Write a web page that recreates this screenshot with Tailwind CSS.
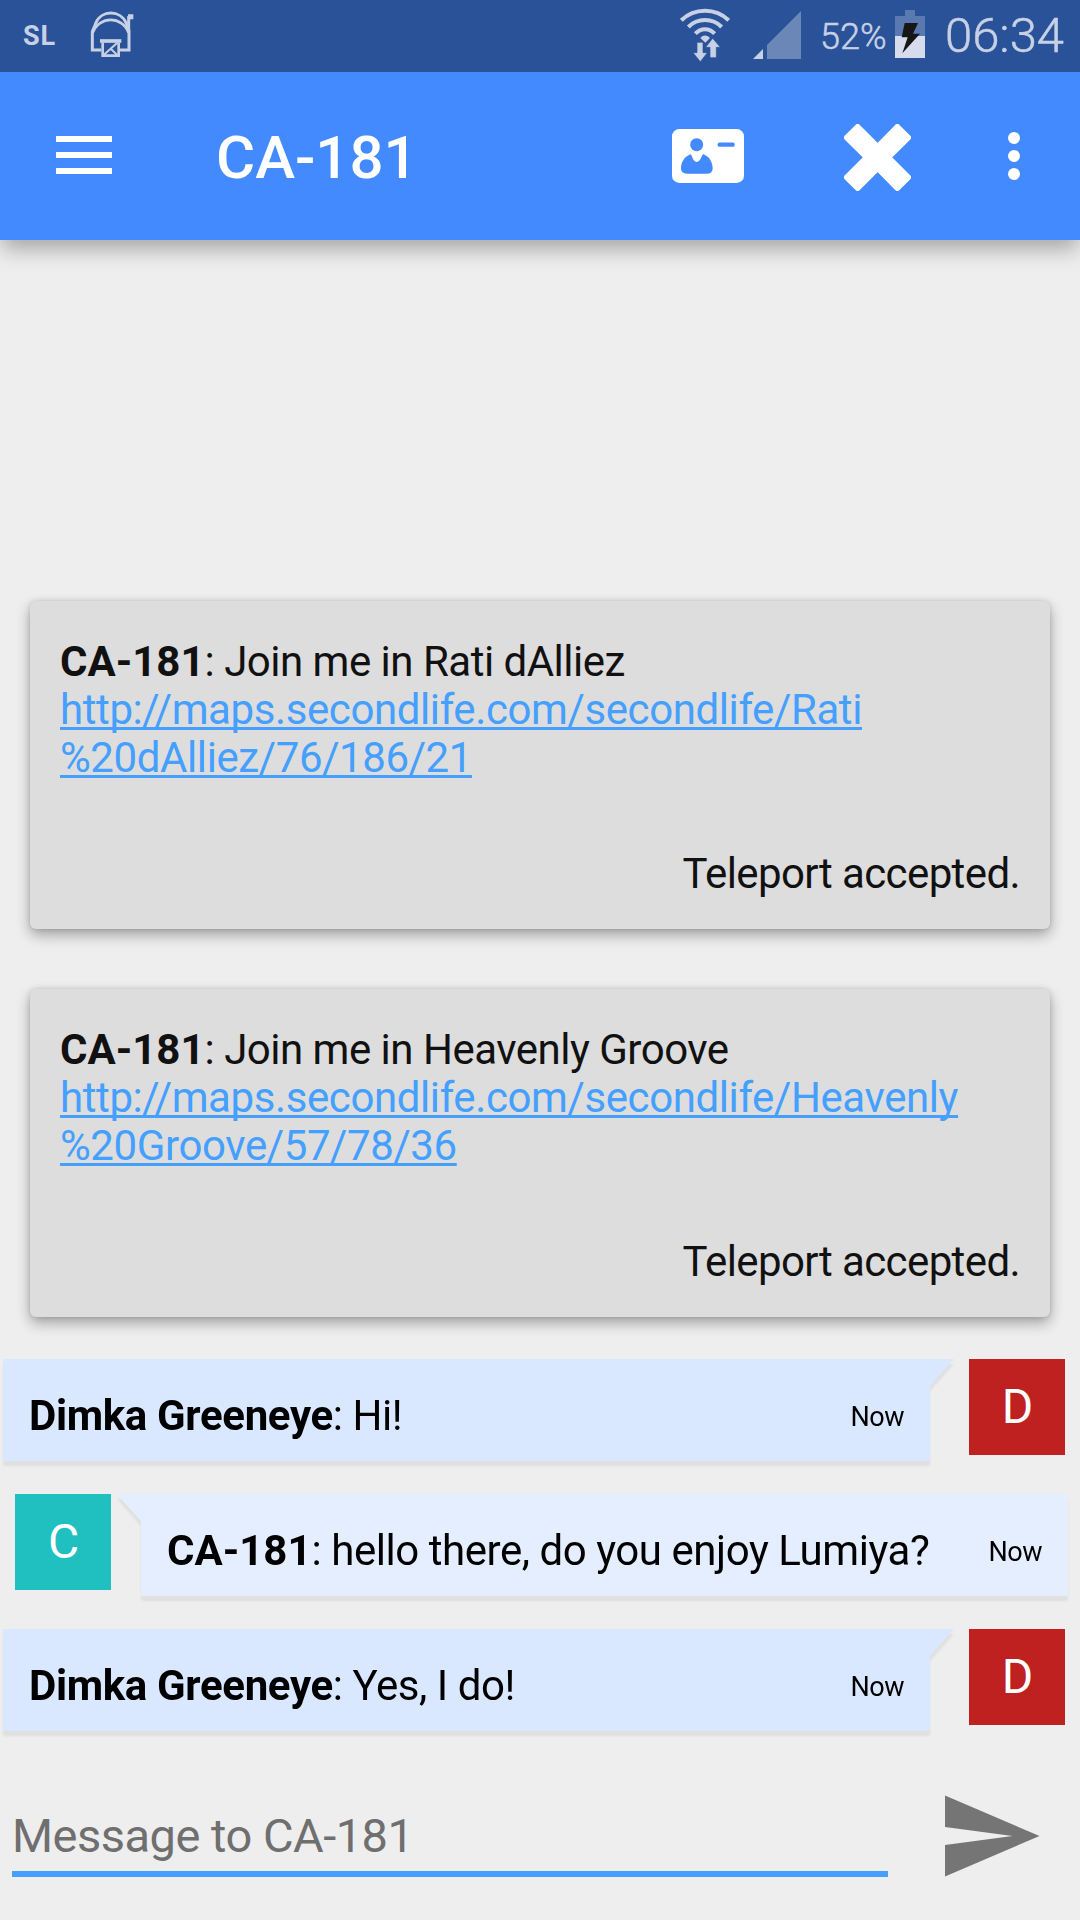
<!DOCTYPE html>
<html lang="en">
<head>
  <meta charset="UTF-8" />
  <meta name="viewport" content="width=device-width, initial-scale=1.0" />
  <title>CA-181</title>
  <script src="https://cdn.jsdelivr.net/npm/@tailwindcss/browser@4"></script>
</head>
<body class="bg-[#eeeeee] font-['Roboto',sans-serif] text-black">
  <div class="w-[1080px] h-[1920px] flex flex-col overflow-hidden">

    <!-- Status bar -->
    <div class="h-[72px] shrink-0 bg-[#2a5298] text-[#c7d1e6] flex items-center relative z-10">
      <span class="ml-[23px] w-[67px] text-[27px] leading-[72px] tracking-[1px] font-bold">SL</span>
      <svg class="w-[44px] h-[48px] -mt-[2px]" viewBox="270 35 132 144" fill="none" stroke="#c7d1e6" stroke-width="9">
        <path d="M304 152H277V98C279 88 284 84 287 72C303 31 362 31 379 72C382 84 387 88 387 98V152H358" />
        <path d="M278 100C298 49 366 49 386 100" stroke-width="8" />
        <path d="M384 96V45H400V60H388" fill="#c7d1e6" stroke="none" />
        <path d="M386 50V98" />
        <path d="M300 125H364" stroke-width="11" />
        <path d="M308 130V169H356V130" stroke-width="8" />
        <path d="M310 168L352 130M330 146L354 169" stroke-width="6" />
      </svg>

      <div class="ml-auto flex items-center">
        <svg class="w-[50px] h-[54px] -mt-[3px]" viewBox="120 22 150 162" fill="none" stroke="#c7d1e6" stroke-width="12">
          <path d="M124 59C163 21 227 21 266 59" />
          <path d="M145 79C172 51 218 51 245 79" />
          <path d="M166 99C182 81 208 81 224 99" />
          <path d="M181 112C189 102 201 102 210 112L196 126Z" fill="#c7d1e6" stroke="none" />
          <path d="M171 125H189V156H202L181 183L159 156H171Z" fill="#c7d1e6" stroke="#2a5298" stroke-width="2" />
          <path d="M218 113L241 140H229V171H210V140H197Z" fill="#c7d1e6" stroke="#2a5298" stroke-width="2" />
        </svg>
        <svg class="ml-[23px] w-[48px] h-[48px] -mt-[2px]" viewBox="339 33 144 144">
          <path d="M339 177L369 147V177Z" fill="#c7d1e6" />
          <path d="M381 135L483 33V177H381Z" fill="#6b87b7" />
        </svg>
        <span class="ml-[19px] w-[75px] text-[36px] leading-[72px] mt-px font-light [-webkit-text-stroke:0.5px_#c7d1e6] whitespace-nowrap">52%</span>
        <svg class="w-[30px] h-[48px] -mt-[4px]" viewBox="765 30 90 144">
          <path d="M795 30H825V48H855V108H765V48H795Z" fill="#5a79b0" />
          <path d="M765 108H855V174H765Z" fill="#d6dcec" />
          <path d="M794 69H834L819 101H840L787 160L803 112H785Z" fill="#161616" />
        </svg>
        <span class="ml-[20px] w-[135px] text-[49px] leading-[72px] font-light [-webkit-text-stroke:0.5px_#c7d1e6] whitespace-nowrap">06:34</span>
      </div>
    </div>

    <!-- App bar -->
    <div class="h-[168px] shrink-0 bg-[#448aff] flex items-center relative shadow-[0_11px_20px_-2px_rgba(0,0,0,0.3)]">
      <svg class="ml-[56px] w-[56px] h-[38px] -mt-[2px]" viewBox="0 0 56 38" fill="#fff">
        <path d="M0 0H56V6H0ZM0 16H56V22H0ZM0 32H56V38H0Z" />
      </svg>
      <h1 class="ml-[104px] text-[60px] leading-[70px] mt-[4px] font-medium text-white">CA-181</h1>
      <div class="ml-auto flex items-center">
        <svg class="w-[72px] h-[54px]" viewBox="96 387 216 162">
          <rect x="96" y="387" width="216" height="162" rx="22" fill="#fff" />
          <circle cx="170" cy="434" r="19.5" fill="#448aff" />
          <path d="M151 463C132 471 123 488 123 505C123 516 130 521 141 521H200C211 521 218 516 218 503C217 486 208 469 190 463C184 463 184 485 170 486C157 485 157 464 151 463Z" fill="#448aff" />
          <path d="M239 434H278" stroke="#448aff" stroke-width="13" stroke-linecap="round" />
        </svg>
        <svg class="ml-[100px] w-[67px] h-[67px] mt-[3px]" viewBox="612 372 201 201">
          <path d="M653 381L713 441L772 381L804 413L744 472L804 532L772 564L713 504L653 564L621 532L681 472L621 413Z" fill="#fff" stroke="#fff" stroke-width="18" stroke-linejoin="round" />
        </svg>
        <svg class="ml-[97px] mr-[60px] w-[12px] h-[48px]" viewBox="0 0 12 48" fill="#fff">
          <circle cx="6" cy="6" r="6" /><circle cx="6" cy="24" r="6" /><circle cx="6" cy="42" r="6" />
        </svg>
      </div>
    </div>

    <!-- Teleport offers -->
    <div class="mt-[361px] mx-[30px] flex flex-col gap-[60px] text-[42px] leading-[48px] tracking-[-0.4px] text-[#111111]">
      <div class="h-[328px] bg-[#dddddd] rounded-[6px] pt-[37px] px-[30px] shadow-[0_6px_14px_rgba(0,0,0,0.32),0_0_5px_rgba(0,0,0,0.12)]">
        <p class="tracking-[-0.5px]"><b class="tracking-normal">CA-181</b>: Join me in Rati dAlliez</p>
        <p class="text-[#449fff] underline decoration-[3px] underline-offset-[3px] [text-decoration-skip-ink:none]">http://maps.secondlife.com/secondlife/Rati<br />%20dAlliez/76/186/21</p>
        <p class="mt-[68px] text-right tracking-[-0.6px]">Teleport accepted.</p>
      </div>
      <div class="h-[328px] bg-[#dddddd] rounded-[6px] pt-[37px] px-[30px] shadow-[0_6px_14px_rgba(0,0,0,0.32),0_0_5px_rgba(0,0,0,0.12)]">
        <p class="tracking-[-0.5px]"><b class="tracking-normal">CA-181</b>: Join me in Heavenly Groove</p>
        <p class="text-[#449fff] underline decoration-[3px] underline-offset-[3px] [text-decoration-skip-ink:none]">http://maps.secondlife.com/secondlife/Heavenly<br />%20Groove/57/78/36</p>
        <p class="mt-[68px] text-right tracking-[-0.6px]">Teleport accepted.</p>
      </div>
    </div>

    <!-- Chat messages -->
    <div class="mt-[42px] flex flex-col gap-[33px] text-[42px] tracking-[-0.45px]">
      <div class="h-[102px] flex pl-[3px] pr-[15px]">
        <div class="flex drop-shadow-[0_5px_1px_rgba(0,0,0,0.06)]">
          <div class="w-[927px] h-[102px] bg-[#d9e7ff] rounded-l-[2px] rounded-br-[2px] px-[26px] pt-[11px] flex justify-between items-center">
            <p><b class="tracking-[-0.35px]">Dimka Greeneye</b>: Hi!</p>
            <span class="text-[27px] pt-[4px]">Now</span>
          </div>
          <svg class="w-[24px] h-[27px]" viewBox="0 0 24 27"><path d="M0 0H24L0 27Z" fill="#d9e7ff" /></svg>
        </div>
        <div class="ml-auto size-[96px] bg-[#bf2020] text-white text-[48px] leading-[96px] text-center tracking-normal pl-px">D</div>
      </div>

      <div class="h-[102px] flex pl-[15px] pr-[12px]">
        <div class="size-[96px] bg-[#21c0c0] text-white text-[48px] leading-[96px] text-center tracking-normal pl-px">C</div>
        <div class="ml-auto flex drop-shadow-[0_5px_1px_rgba(0,0,0,0.06)]">
          <svg class="w-[24px] h-[27px]" viewBox="0 0 24 27"><path d="M24 0H0L24 27Z" fill="#e5eeff" /></svg>
          <div class="w-[927px] h-[102px] bg-[#e5eeff] rounded-r-[2px] rounded-bl-[2px] px-[26px] pt-[11px] flex justify-between items-center">
            <p><b class="tracking-normal">CA-181</b>: hello there, do you enjoy Lumiya?</p>
            <span class="text-[27px] pt-[4px]">Now</span>
          </div>
        </div>
      </div>

      <div class="h-[102px] flex pl-[3px] pr-[15px]">
        <div class="flex drop-shadow-[0_5px_1px_rgba(0,0,0,0.06)]">
          <div class="w-[927px] h-[102px] bg-[#d9e7ff] rounded-l-[2px] rounded-br-[2px] px-[26px] pt-[11px] flex justify-between items-center">
            <p><b class="tracking-[-0.35px]">Dimka Greeneye</b>: Yes, I do!</p>
            <span class="text-[27px] pt-[4px]">Now</span>
          </div>
          <svg class="w-[24px] h-[27px]" viewBox="0 0 24 27"><path d="M0 0H24L0 27Z" fill="#d9e7ff" /></svg>
        </div>
        <div class="ml-auto size-[96px] bg-[#bf2020] text-white text-[48px] leading-[96px] text-center tracking-normal pl-px">D</div>
      </div>
    </div>

    <!-- Message input -->
    <div class="mt-[51px] flex pl-[12px] pr-[36px] justify-between">
      <div class="w-[876px] h-[95px] border-b-[6px] border-[#449fff] pt-[24px] text-[47px] leading-[60px] tracking-[-0.5px] text-[#6f6f6f]">Message to CA-181</div>
      <svg class="size-[108px]" viewBox="0 0 24 24" fill="#757575"><path d="M2 21L23 12 2 3V10L17 12 2 14Z" /></svg>
    </div>
  </div>
</body>
</html>
